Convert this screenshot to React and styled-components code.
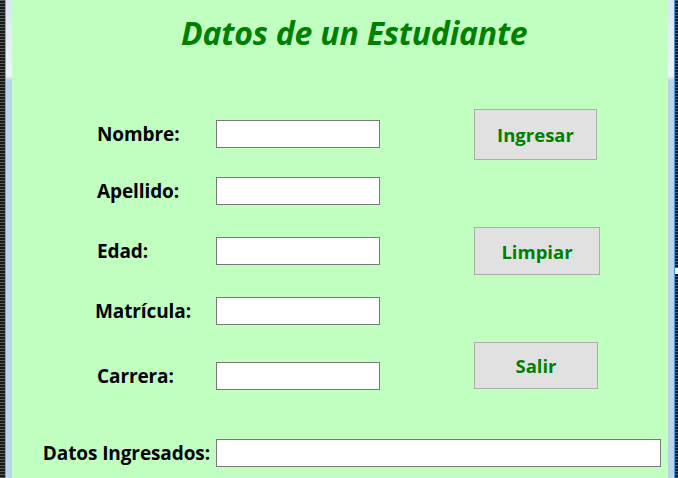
import React from 'react';
import styled, { createGlobalStyle } from 'styled-components';

const GlobalStyle = createGlobalStyle`
    html, body {
        margin: 0;
        padding: 0;
        background: #1e1e1e;
    }
    * {
        box-sizing: border-box;
    }
`;

const Window = styled.div`
    width: 678px;
    height: 478px;
    display: flex;
    overflow: hidden;
    font-family: "Open Sans", "Noto Sans", sans-serif;
`;

const Edge = styled.div`
    flex: 0 0 ${(p) => p.width}px;
    display: flex;
    flex-direction: ${(p) => (p.right ? 'row-reverse' : 'row')};
`;

const Dots = styled.div`
    flex: 0 0 ${(p) => p.width}px;
    background:
        repeating-linear-gradient(180deg, #5a5a5a 0 1px, #1a1a1a 1px 3px);
    position: relative;
`;

const Mark = styled.div`
    position: absolute;
    top: 268px;
    left: 0;
    width: 3px;
    height: 6px;
    background: #ffffff;
`;

const Frame = styled.div`
    flex: 1;
    background:
        linear-gradient(180deg, #d8e6f4 0, #eef4fa 76px, #bcd4ec 80px, #bcd4ec 100%);
    border-${(p) => (p.right ? 'right' : 'left')}: 1px solid ${(p) => (p.right ? '#3d9be6' : '#7f9fc4')};
`;

const Main = styled.main`
    flex: 1;
    background: #c0ffc0;
    display: flex;
    flex-direction: column;
`;

const Title = styled.h1`
    margin: 0;
    height: 109px;
    padding: 14px 0 0 169px;
    font-size: 32px;
    line-height: 38px;
    font-weight: 700;
    font-style: italic;
    color: #008000;
    white-space: nowrap;
    letter-spacing: -0.2px;
`;

const Row = styled.div`
    display: flex;
    align-items: ${(p) => p.align || 'center'};
    height: ${(p) => p.height}px;
    margin-top: ${(p) => p.gap || 0}px;
    padding-left: ${(p) => p.indent ?? 85}px;
`;

const Field = styled.div`
    display: flex;
    align-items: center;
    height: 28px;
`;

const Label = styled.label`
    width: ${(p) => p.width || 119}px;
    text-align: ${(p) => p.alignText || 'left'};
    padding-right: ${(p) => p.pad || 0}px;
    margin-left: ${(p) => p.shift || 0}px;
    font-size: 19px;
    font-weight: 700;
    color: #000000;
    white-space: nowrap;
    letter-spacing: -0.1px;
`;

const Input = styled.input`
    width: ${(p) => p.width || 164}px;
    height: 28px;
    margin: 0;
    padding: 0 3px;
    border: 1px solid #7a7a7a;
    background: #ffffff;
    font-family: inherit;
    font-size: 15px;
    outline: none;
`;

const Button = styled.button`
    margin-left: 94px;
    align-self: ${(p) => p.self || 'auto'};
    width: ${(p) => p.width}px;
    height: ${(p) => p.height}px;
    background: #e1e1e1;
    border: 1px solid #adadad;
    border-radius: 0;
    padding: 0;
    font-family: inherit;
    font-size: 18.5px;
    font-weight: 700;
    color: #008000;
    cursor: pointer;
`;

const App = () => {
    return (
        <>
            <GlobalStyle />
            <Window>
                <Edge width={12}>
                    <Dots width={5} />
                    <Frame />
                </Edge>
                <Main>
                    <Title>Datos de un Estudiante</Title>

                    <Row height={50}>
                        <Label>Nombre:</Label>
                        <Input />
                        <Button width={123} height={51} self="flex-start">Ingresar</Button>
                    </Row>

                    <Row height={28} gap={18}>
                        <Label>Apellido:</Label>
                        <Input />
                    </Row>

                    <Row height={48} gap={22}>
                        <Label>Edad:</Label>
                        <Input />
                        <Button width={126} height={48}>Limpiar</Button>
                    </Row>

                    <Row height={28} gap={22}>
                        <Label shift={-2} width={121}>Matrícula:</Label>
                        <Input />
                    </Row>

                    <Row height={48} gap={17} align="flex-end">
                        <Field>
                            <Label>Carrera:</Label>
                            <Input />
                        </Field>
                        <Button width={124} height={47} self="flex-start">Salir</Button>
                    </Row>

                    <Row height={28} gap={49} indent={0}>
                        <Label width={204} alignText="right" pad={6}>Datos Ingresados:</Label>
                        <Input width={445} />
                    </Row>
                </Main>
                <Edge width={10} right>
                    <Dots width={3}>
                        <Mark />
                    </Dots>
                    <Frame right />
                </Edge>
            </Window>
        </>
    );
};

export default App;
